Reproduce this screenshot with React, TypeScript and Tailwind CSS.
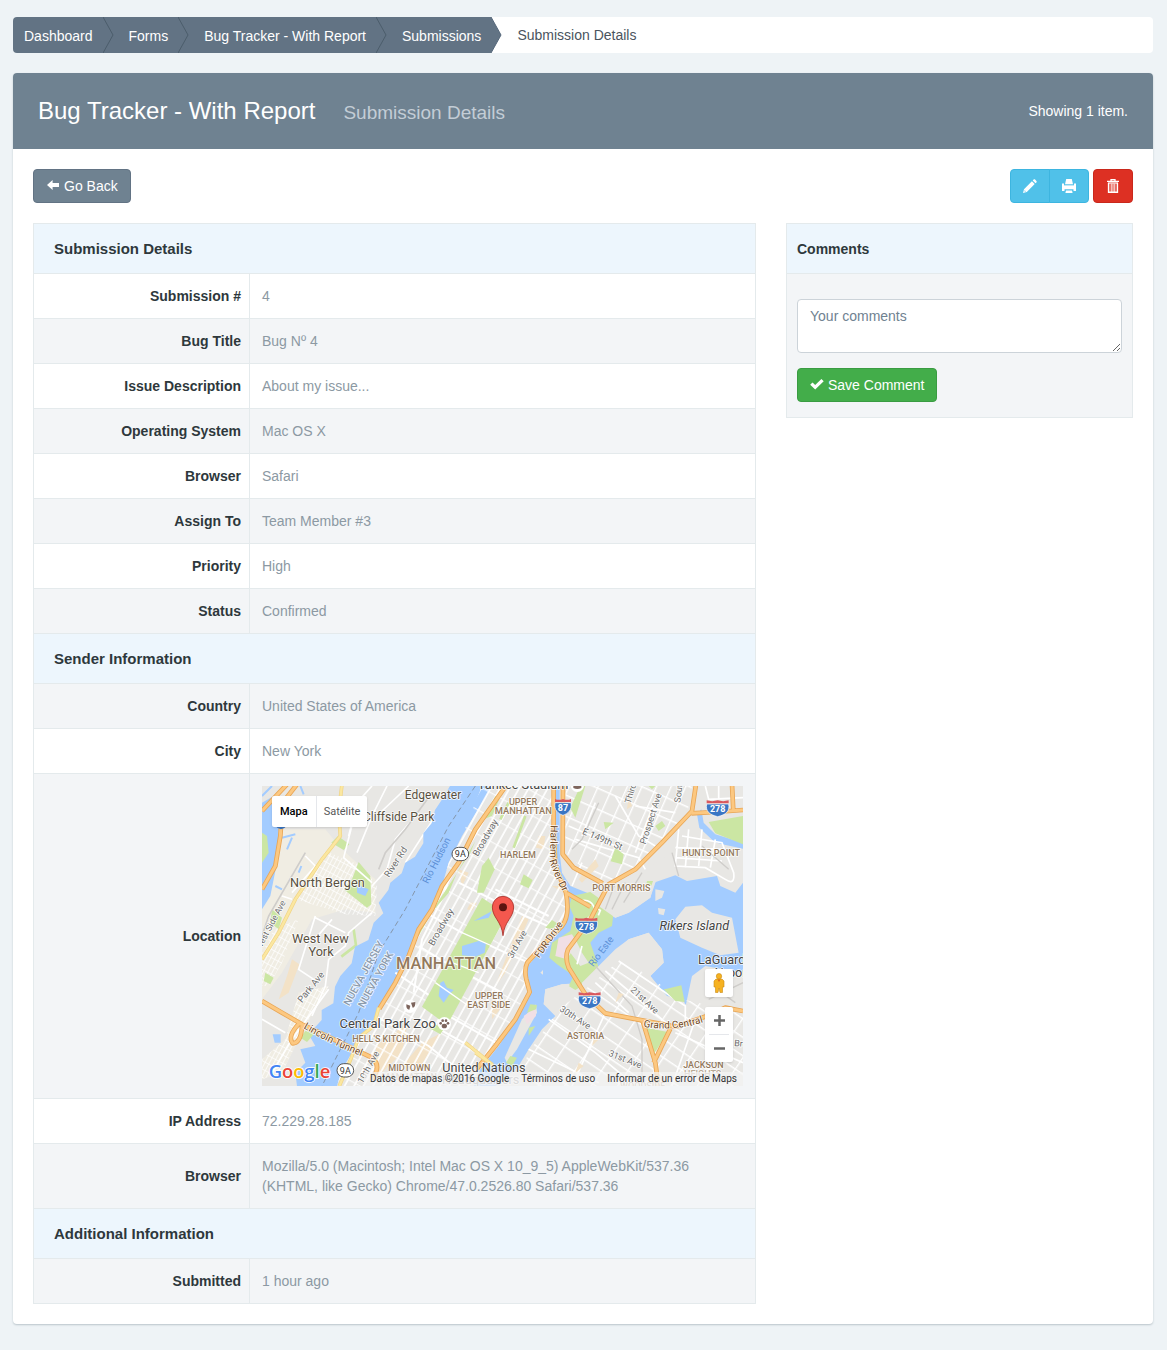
import React from "react";

type Row = { label?: string; value?: React.ReactNode; heading?: string };

const crumbs = ["Dashboard", "Forms", "Bug Tracker - With Report", "Submissions"];

const ArrowLeftIcon = () => (
  <svg viewBox="0 0 14 14" className="size-3.5" fill="currentColor" aria-hidden="true">
    <path d="M1 6 6.6 1V4H13v4H6.6v3z" />
  </svg>
);

const PencilIcon = () => (
  <svg viewBox="0 0 14 14" className="size-3.5" fill="currentColor" aria-hidden="true">
    <path d="M0 14l1-3.800L8.900 2.300l2.800 2.800L3.800 13zM9.700 1.500l.9-.9c.5-.5 1-.5 1.500 0l1.300 1.300c.5.5.5 1 0 1.500l-.9.900z" />
    <path d="M1.500 10.900l1.700 1.700-1 .3-1-1z" className="fill-[#9fdcf3]" />
  </svg>
);

const PrintIcon = () => (
  <svg viewBox="0 0 14 14" className="size-3.5" fill="currentColor" aria-hidden="true">
    <path d="M4.200 0h5.600l1.200 5.200H3z" />
    <path d="M0 4.500h2V6h10V4.500h2V12h-2.500v-1.800h-9V12H0z" />
    <path d="M2 6.400h10" className="stroke-[#a5dff4]" strokeWidth=".8" />
    <path d="M4 11.400h6l.6 2.600H3.400z" />
  </svg>
);

const TrashIcon = () => (
  <svg viewBox="0 0 14 14" className="size-3.5" fill="none" stroke="currentColor" aria-hidden="true">
    <path d="M5 1.800V.5h4v1.300M1 2.400h12" strokeWidth="1.300" />
    <path d="M2.600 4v9.300h8.800V4" strokeWidth="1.500" />
    <path d="M2 4h10" strokeWidth="1.200" />
    <path d="M5.200 4.500V13M7 4.500V13M8.800 4.500V13" strokeWidth="1" />
  </svg>
);

const CheckIcon = () => (
  <svg viewBox="0 0 14 14" className="size-3.5" fill="currentColor" aria-hidden="true">
    <path d="M.2 6.700 2.500 4.500l2.700 2.600L11.400.9l2.300 2.300-8.500 8.400z" />
  </svg>
);

const Shield = ({ x, y, n }: { x: number; y: number; n: string }) => {
  const w = n.length > 2 ? 33 : 24;
  return (
    <g transform={`translate(${x} ${y})`}>
      <path
        d={`M${-w} -12H${w}C${w + 4} 10 ${w - 8} 20 0 26C${8 - w} 20 ${-w - 4} 10 ${-w} -12z`}
        fill="#3a76c4"
        stroke="#fff"
        strokeWidth="2"
      />
      <path d={`M${-w} -14v-9q${w / 2} 5 ${w} 0q${w / 2} 5 ${w} 0v9z`} fill="#d9595f" />
      <text y="13" textAnchor="middle" fontSize="27" fontWeight="700" fill="#fff">
        {n}
      </text>
    </g>
  );
};

const Route9A = ({ x, y }: { x: number; y: number }) => (
  <g transform={`translate(${x} ${y})`}>
    <rect x="-25" y="-20" width="50" height="40" rx="20" fill="#fff" stroke="#555" strokeWidth="3" />
    <text y="10" textAnchor="middle" fontSize="27" fill="#333">
      9A
    </text>
  </g>
);

// name, x, y, size, colour, rotation, weight
type Label = [string, number, number, number, string, number?, number?];

const places: Label[] = [
  ["Edgewater", 513, 39, 36, "#59503f"],
  ["Cliffside Park", 410, 105, 36, "#59503f"],
  ["North Bergen", 196, 304, 38, "#59503f"],
  ["West New", 175, 472, 38, "#59503f"],
  ["York", 177, 510, 38, "#59503f"],
  ["Yankee Stadium", 783, 8, 38, "#444"],
  ["Central Park Zoo", 377, 725, 39, "#444"],
  ["United Nations", 666, 858, 38, "#444"],
  ["Headquarters", 656, 895, 38, "#999"],
  ["LaGuardia", 1394, 535, 38, "#444"],
  ["Airport", 1409, 574, 38, "#444"],
  ["MANHATTAN", 552, 549, 49, "#93795c", 0, 500],
  ["UPPER", 783, 57, 27, "#93795c", 0, 500],
  ["MANHATTAN", 784, 84, 28, "#93795c", 0, 500],
  ["HARLEM", 768, 216, 27, "#93795c", 0, 500],
  ["HUNTS POINT", 1347, 210, 27, "#93795c", 0, 500],
  ["PORT MORRIS", 1078, 315, 27, "#93795c", 0, 500],
  ["UPPER", 681, 639, 27, "#93795c", 0, 500],
  ["EAST SIDE", 680, 666, 27, "#93795c", 0, 500],
  ["ASTORIA", 971, 759, 27, "#93795c", 0, 500],
  ["HELL'S KITCHEN", 372, 768, 27, "#93795c", 0, 500],
  ["MIDTOWN", 442, 855, 27, "#93795c", 0, 500],
  ["MANHATTAN", 442, 882, 27, "#b8a995", 0, 500],
  ["JACKSON", 1324, 846, 27, "#93795c", 0, 500],
  ["HEIGHTS", 1322, 873, 27, "#b8a995", 0, 500],
  ["WOODSIDE", 1142, 910, 27, "#b8a995", 0, 500],
  ["Broadway", 678, 160, 28, "#6b6b6b", -60],
  ["Broadway", 545, 428, 28, "#6b6b6b", -60],
  ["River Rd", 409, 233, 28, "#6b6b6b", -57],
  ["Park Ave", 154, 609, 28, "#6b6b6b", -51],
  ["West Side Ave", 33, 422, 26, "#6b6b6b", -62],
  ["3rd Ave", 773, 479, 27, "#6b6b6b", -61],
  ["10th Ave", 327, 848, 27, "#6b6b6b", -61],
  ["Third Ave", 1122, 0, 27, "#6b6b6b", -73],
  ["Prospect Ave", 1175, 101, 27, "#6b6b6b", -72],
  ["Southern", 1262, -3, 27, "#6b6b6b", -82],
  ["E 149th St", 1018, 168, 28, "#6b6b6b", 23],
  ["21st Ave", 1142, 649, 27, "#6b6b6b", 43],
  ["30th Ave", 935, 702, 27, "#6b6b6b", 33],
  ["31st Ave", 1086, 828, 27, "#6b6b6b", 22],
  ["Broadway", 1475, 785, 27, "#6b6b6b", 5],
  ["FDR Drive", 868, 466, 29, "#714a26", -55],
  ["NUEVA JERSEY", 314, 567, 31, "#8a9aac", -61, 500],
  ["NUEVA YORK", 350, 586, 31, "#8a9aac", -61, 500],
];

const manhattan =
  "M660 0L600 150L560 230L540 300L505 370L465 440L440 510L400 590L350 660L335 720L290 750L270 800L240 850L225 900H635L655 850L710 780L760 700L805 620L790 550L830 500L905 410L920 330L890 250L880 180V0z";

const highways = [
  "M735 -5L640 130L590 230L540 300L510 370L470 430L440 510L400 590L352 668",
  "M875 -5V120L880 240L912 320Q925 390 900 420L850 470L796 530Q786 550 793 580L803 618L760 700L700 780L645 848",
  "M903 -5L902 205L935 245L1022 292",
  "M1302 -5L1290 75L1200 170L1120 250L1040 295L985 400L918 490Q908 515 920 545L970 625L1030 682L1140 703L1240 722L1335 690L1390 665L1443 675",
  "M915 322L985 362",
  "M1288 82L1360 78L1443 72M1410 -5L1414 75",
  "M105 -5L62 50L55 150L40 240L0 310M0 75L75 -5",
  "M0 645L60 680L120 715L330 815Q360 840 330 880",
  "M112 712Q75 750 92 772Q118 770 120 718",
  "M1142 705L1180 830L1190 905M1225 728L1175 830",
];

const yellowRoads =
  "M240 -5L230 80L235 150L180 220L100 340L50 440L0 520M350 665L335 720L290 755L268 815L232 900M610 770L690 835L640 800";

const MapDrawing = () => (
  <svg
    viewBox="0 0 1443 900"
    preserveAspectRatio="xMidYMid slice"
    className="block size-full font-['Roboto',sans-serif]"
    role="img"
    aria-label="New York"
  >
    <defs>
      <pattern id="avenues" width="25" height="64" patternUnits="userSpaceOnUse" patternTransform="rotate(29)">
        <path d="M3 0V64" stroke="#fff" strokeWidth="5" />
        <path d="M0 5H25" stroke="#fff" strokeWidth="3" />
      </pattern>
      <pattern id="blocks" width="12" height="22" patternUnits="userSpaceOnUse" patternTransform="rotate(28)">
        <path d="M1 0V22M0 1H12" stroke="#fff" strokeWidth="2.500" />
      </pattern>
      <pattern id="bronx" width="40" height="58" patternUnits="userSpaceOnUse" patternTransform="rotate(24)">
        <path d="M2 0V58M0 2H40" stroke="#fff" strokeWidth="4" />
      </pattern>
      <pattern id="queens" width="66" height="46" patternUnits="userSpaceOnUse" patternTransform="rotate(34)">
        <path d="M2 0V46M0 2H66" stroke="#fff" strokeWidth="4" />
      </pattern>
      <path id="lincoln" d="M124 726Q210 778 315 817" />
      <path id="harlemdr" d="M866 118L864 230Q880 280 912 335" />
      <path id="grandcentral" d="M1144 722Q1240 740 1345 702" />
    </defs>

    <rect width="1443" height="900" fill="#e8e7e4" />

    {/* New Jersey */}
    <path d="M60 130L190 130L240 190L340 280L340 380L250 370L150 400L60 560L0 640V320z" fill="#f0ede3" />
    <path d="M190 195L300 240L345 300L340 390L250 385L100 340z" fill="url(#blocks)" />
    <path d="M35 430L110 400L60 530L20 600L0 600V500z" fill="url(#blocks)" />
    <path d="M110 620L200 600L130 720L60 860L0 880V820L70 760z" fill="#f0ede3" />
    <path d="M110 620L200 600L130 720L60 860L0 880V820L70 760z" fill="url(#blocks)" />
    <path d="M0 50L35 30L50 130L45 230L25 330L0 370z" fill="#a3ccff" />
    <path d="M0 140L15 150L20 200L0 230z" fill="#cbe6a3" />
    <path d="M60 155L100 145M90 155L75 190M115 0L125 25M0 30L30 0M110 260L118 240M40 300L60 310" stroke="#a3ccff" strokeWidth="6" fill="none" />
    <path d="M32 745h24v25H38z" fill="#a3ccff" />
    <path d="M90 520L112 535L80 620L50 640L75 570z" fill="#f3e2c7" />
    <path d="M290 228L325 270L328 355L315 365L245 310L270 280z" fill="#cbe6a3" />
    <path d="M285 295L320 310L310 330L285 320z" fill="#a3ccff" />
    <path d="M228 150L262 175L245 192L208 170z" fill="#cbe6a3" />
    <path d="M30 370L60 395L50 430L25 410zM10 560L35 575L25 595L5 585z" fill="#cbe6a3" />
    <path d="M275 430L282 478L238 512" stroke="#cbe6a3" strokeWidth="8" fill="none" />
    <g stroke="#fff" strokeWidth="5" fill="none">
      <path d="M375 0L330 90L285 200M470 80L400 160L375 250L330 300M285 60L245 215L330 290" />
      <path d="M330 0L285 50L260 150M440 0L360 75M520 90L430 230M130 210L160 240L90 320" />
      <path d="M160 390L110 550L170 590M210 400L150 470M160 395L250 440M330 380L260 440L250 480L200 520L190 600L150 690" />
      <path d="M90 340L60 330M0 700L70 740M30 860L90 760L200 610" />
    </g>
    <path d="M130 200L20 390L0 450M350 250L370 200L430 130L510 20" stroke="#cfcdca" strokeWidth="5" fill="none" />

    {/* rivers and bay */}
    <path
      d="M564 0L539 42L519 72L509 112L484 142L484 172L459 212L430 230L419 262L385 290L379 312L350 350L364 382L335 410L319 462L279 482L269 532L235 570L219 602L214 652L179 672L179 702L140 745L160 780L115 790L130 830L100 860L105 900H225L240 850L270 800L290 750L335 720L350 660L400 590L440 510L465 440L505 370L540 300L560 230L600 150L690 0z"
      fill="#a3ccff"
    />
    <path
      d="M880 0H893V200L900 260L925 300L975 320L1000 360L1060 395L1100 380L1165 335L1175 290L1240 268L1275 285L1365 270L1375 300L1420 320L1443 290V640L1270 655L1262 640L1215 630L1165 570L1205 530L1200 490L1160 440L1100 460L1060 500L960 590L900 595L850 610L845 655L880 690L840 730L800 790L770 840L700 900H635L655 850L710 780L760 700L805 620L790 550L830 500L905 410L920 330L890 250L880 180z"
      fill="#a3ccff"
    />
    <path d="M1305 85L1318 70L1325 110L1360 145L1443 170V188L1360 170L1312 125z" fill="#a3ccff" />
    <path d="M1340 108L1443 90V175L1360 142z" fill="#cbe6a3" />
    <path d="M130 735L160 740L135 768L115 755z" fill="#cbe6a3" />

    {/* islands */}
    <path d="M1270 362L1320 358L1350 380L1410 395L1430 500L1375 508L1320 485L1255 455L1240 400z" fill="#e8e7e4" />
    <path d="M1180 310L1207 315L1200 335L1180 345zM1188 366L1210 370L1205 388L1190 384zM835 560l8 -8v14z" fill="#e8e7e4" />
    <path d="M1443 560L1330 540L1290 570L1272 655L1443 660z" fill="#e8e7e4" />
    <path d="M930 330L985 318L1030 350L1055 375L1050 420L1010 440L985 470L1012 550L955 615L920 600L935 570L885 535L862 515L870 470L925 435L935 390L922 360z" fill="#cbe6a3" />
    <path d="M890 455L930 445L945 470L915 520L880 510z" fill="#f1dfe5" />
    <path d="M940 460L960 500L980 530L955 540L925 500z" fill="#e8e7e4" />
    <path d="M955 345Q990 335 1000 375L975 400M1000 365l15 8-6 15M960 480l-15 55" stroke="#fff" strokeWidth="5" fill="none" />
    <path d="M822 655L825 680L765 790L735 830L728 815L780 700z" fill="#e8e7e4" />
    <path d="M785 690L820 665L822 690L795 715z" fill="#f1dfe5" />
    <path d="M805 655L825 657L822 670L795 680zM745 810L765 815L750 840L732 830zM800 725L820 720L800 750z" fill="#cbe6a3" />

    {/* Manhattan */}
    <g fill="#f3e2c7">
      <path d="M780 390L800 400L730 560L700 600L715 560zM690 640L730 650L690 700zM340 780L400 740L440 700L420 800L350 870zM480 770L540 740L470 850L420 840z" />
      <path d="M590 250L620 260L600 300zM625 350L645 350L630 375L615 370zM830 150L850 150L845 190L822 185zM890 300L905 320L870 300z" />
    </g>
    <path d={manhattan} fill="url(#avenues)" />
    <path d="M590 290L790 390L880 430M700 310L860 390M500 385L600 440L730 500L800 530M470 480L560 535L720 620M400 560L520 640M340 690L500 780L600 860M480 700L640 790M560 690L700 770" stroke="#fff" strokeWidth="6" fill="none" />
    <path d="M700 40L650 130L560 280L545 330L480 460L455 620" stroke="#fff" strokeWidth="6" fill="none" />
    <path d="M660 335L735 385L565 700L545 710L480 662z" fill="#cbe6a3" />
    <path d="M600 480L650 465L672 472L668 500L640 512L600 508zM535 590L545 585L555 605L575 612L560 628L545 650L530 630zM690 375l-10 20-45 10z" fill="#a3ccff" />
    <path d="M600 440L690 480M570 530L650 560M520 590L620 660" stroke="#fff" strokeWidth="4" fill="none" />
    <path d="M680 215L698 250L665 320L645 320L660 240z" fill="#cbe6a3" />
    <path d="M785 265L812 282L800 307L774 295zM712 40L690 90L665 100L700 30zM560 320L585 260L640 165L625 200L520 360L470 450L465 430zM870 402L890 415L870 430L850 425zM500 725L535 745L545 730L520 715z" fill="#cbe6a3" />
    <path d="M790 90L755 185M740 50L715 100" stroke="#cbe6a3" strokeWidth="8" />

    {/* Bronx */}
    <path d="M910 0H1290L1275 90L1110 250L1040 290L990 270L910 200z" fill="url(#bronx)" />
    <path d="M1040 300L1140 260L1240 190L1180 290L1165 335L1100 380L1060 395L1010 360zM1260 130L1390 180L1425 280L1380 265L1250 250z" fill="#e8e7e4" />
    <g stroke="#fff" strokeWidth="5" fill="none">
      <path d="M940 160L1130 215L1150 250M1000 50L960 150M1060 30L1130 150L1180 180M1180 40L1120 200M1240 80L1120 60M920 120L1060 180" />
      <path d="M1250 130L1240 240L1330 245L1390 280Q1420 300 1415 260L1380 170L1260 150M1320 130L1310 240M1360 160L1345 245M1240 185L1385 190M1280 130L1270 245M1240 215L1380 225" />
      <path d="M1330 0L1340 40L1443 35M1370 0V40M960 230L930 300" />
    </g>
    <path d="M1060 290L1030 370M1090 290L1050 370M1140 260L1085 350M1230 200L1250 270M930 190L960 160L1010 50M1320 180L1400 250" stroke="#cfcdca" strokeWidth="4" fill="none" />
    <path d="M1060 185L1085 205L1080 235L1046 226zM970 0L940 95L925 65L955 0zM1200 105L1210 120L1190 135L1180 120zM1025 108L1055 110L1030 130zM1160 0H1180L1170 10zM1155 285l18 0-5 14-15-4z" fill="#cbe6a3" />
    <path d="M1000 220L1010 240L960 290L950 280zM1100 30L1110 60L1095 70z" fill="#f3e2c7" />

    {/* Queens */}
    <path d="M1070 510L1260 640L1443 680V900H760L800 800L890 670L960 600z" fill="url(#queens)" />
    <path d="M845 655L850 610L900 595L950 600L1060 490L1100 460L1160 440L1200 490L1205 530L1165 570L1215 640L1150 560L1070 525L970 610L890 670z" fill="#e8e7e4" />
    <path d="M1070 525L1270 660V720M1030 555L1200 700M1000 590L1100 680M1030 680L930 900M860 700L1000 800L1120 900M1240 740L1443 830M1300 700L1230 900M800 790L1010 890" stroke="#fff" strokeWidth="5" fill="none" />
    <path d="M1000 540L1110 660L1140 760V900M1340 640L1443 590M1350 600L1420 650" stroke="#cfcdca" strokeWidth="4" fill="none" />
    <path d="M1215 608L1258 598L1268 648L1240 645L1205 610zM1150 725L1218 738L1175 805zM920 600L960 575L960 600L940 612z" fill="#cbe6a3" />
    <path d="M1070 620L1085 625L1060 650zM1000 740L1015 755L990 780zM950 830L965 840L940 860z" fill="#f3e2c7" />

    {/* highways */}
    <g fill="none" strokeLinejoin="round">
      {highways.map((d) => (
        <path key={d} d={d} stroke="#e9a655" strokeWidth="14" />
      ))}
      {highways.map((d) => (
        <path key={d} d={d} stroke="#fcc881" strokeWidth="9" />
      ))}
      <path d={yellowRoads} stroke="#f0d486" strokeWidth="11" />
      <path d={yellowRoads} stroke="#fbe7a0" strokeWidth="7" />
      <path d="M640 0L560 120L430 370L350 500L290 680L180 900" stroke="#8596aa" strokeWidth="3" strokeDasharray="16 10" />
    </g>

    <g stroke="#fff" strokeOpacity="0.85" strokeWidth="5" strokeLinejoin="round" className="[paint-order:stroke]">
      {places.map(([name, x, y, size, fill, rotate = 0, weight = 400], i) => (
        <text
          key={i}
          transform={`translate(${x} ${y}) rotate(${rotate})`}
          textAnchor="middle"
          fontSize={size}
          fontWeight={weight}
          fill={fill}
        >
          {name}
        </text>
      ))}
      <text x="1297" y="431" textAnchor="middle" fontSize="38" fontStyle="italic" fill="#444">
        Rikers Island
      </text>
      <g fontSize="30" fill="#714a26">
        <text>
          <textPath href="#lincoln">Lincoln Tunnel</textPath>
        </text>
        <text>
          <textPath href="#harlemdr">Harlem River Dr</textPath>
        </text>
        <text>
          <textPath href="#grandcentral">Grand Central</textPath>
        </text>
      </g>
    </g>
    <g fontSize="29" fill="#5b8fd6" textAnchor="middle">
      <text transform="translate(532 228) rotate(-63)">Río Hudson</text>
      <text transform="translate(1025 502) rotate(-53)">Río Este</text>
    </g>

    <Shield x={903} y={62} n="87" />
    <Shield x={1367} y={66} n="278" />
    <Shield x={973} y={418} n="278" />
    <Shield x={983} y={642} n="278" />
    <Route9A x={595} y={204} />
    <Route9A x={250} y={853} />
    <path d="M40 120Q57 140 74 120z" fill="#3a76c4" />

    {/* points of interest */}
    <g fill="#7d655d">
      <circle cx="547" cy="713" r="20" fill="#fff" />
      <ellipse cx="547" cy="720" rx="8" ry="7" />
      <circle cx="536" cy="712" r="4" />
      <circle cx="542" cy="704" r="4" />
      <circle cx="552" cy="704" r="4" />
      <circle cx="558" cy="712" r="4" />
      <circle cx="444" cy="661" r="20" fill="#fff" />
      <path d="M433 655l12 4-3 12q-10 0-9-16zM447 650l13 -2q1 16-8 17z" />
      <circle cx="946" cy="-2" r="20" fill="#fff" />
      <path d="M934 -4h24v10q-12 6-24 0z" />
    </g>

    {/* marker */}
    <path
      d="M723 449C719 405 691 395 691 363A32 32 0 0 1 755 363C755 395 727 405 723 449z"
      fill="#f4584e"
      stroke="#a8302a"
      strokeWidth="2.500"
    />
    <circle cx="723" cy="364" r="12" fill="#5c1410" />

    <text x="20" y="876" fontSize="55" fontWeight="600" stroke="#fff" strokeWidth="5" className="font-['Open_Sans',sans-serif] [paint-order:stroke]">
      <tspan fill="#4285f4">G</tspan>
      <tspan fill="#ea4335">o</tspan>
      <tspan fill="#fbbc05">o</tspan>
      <tspan fill="#4285f4">g</tspan>
      <tspan fill="#34a853">l</tspan>
      <tspan fill="#ea4335">e</tspan>
    </text>
  </svg>
);

const LocationMap = () => (
  <div className="relative h-[300px] overflow-hidden font-['Roboto',sans-serif]">
    <MapDrawing />
    <div className="absolute left-2.5 top-2.5 flex h-[31px] rounded-xs bg-white text-[11px] shadow-sm">
      <button className="border-r border-gray-200 px-2 font-medium text-black">Mapa</button>
      <button className="px-[7px] text-[#565656]">Satélite</button>
    </div>
    <button aria-label="Street View" className="absolute bottom-[89px] right-2.5 flex size-7 items-center justify-center rounded-xs bg-white shadow-sm">
      <svg viewBox="0 0 12 20" className="h-5 w-3" aria-hidden="true">
        <path d="M3 6h6l2 2v6H9.500V19.500H7L6 15l-1 4.500H2.500V14H1V8z" fill="#f6b221" stroke="#c98b16" strokeWidth=".6" />
        <circle cx="6" cy="3.200" r="2.700" fill="#f6b221" stroke="#c98b16" strokeWidth=".6" />
        <path d="M4.500 6.500h3L6 9z" fill="#e06a1b" />
      </svg>
    </button>
    <div className="absolute bottom-6 right-2.5 flex w-7 flex-col rounded-xs bg-white text-[#666] shadow-sm">
      <button aria-label="Zoom in" className="flex h-[27px] items-center justify-center">
        <svg viewBox="0 0 11 11" className="size-[11px]" stroke="currentColor" strokeWidth="2.500" aria-hidden="true">
          <path d="M0 5.500h11M5.500 0v11" />
        </svg>
      </button>
      <div className="mx-1 h-px bg-gray-200" />
      <button aria-label="Zoom out" className="flex h-[27px] items-center justify-center">
        <svg viewBox="0 0 11 11" className="size-[11px]" stroke="currentColor" strokeWidth="2.500" aria-hidden="true">
          <path d="M0 5.500h11" />
        </svg>
      </button>
    </div>
    <div className="absolute bottom-0 right-0 flex h-3.5 items-center gap-3 bg-[#f5f5f5]/70 px-1.5 text-[10px] text-[#333]">
      <span>Datos de mapas ©2016 Google</span>
      <a href="#terms">Términos de uso</a>
      <a href="#report">Informar de un error de Maps</a>
    </div>
  </div>
);

const rows: Row[] = [
  { heading: "Submission Details" },
  { label: "Submission #", value: "4" },
  { label: "Bug Title", value: "Bug Nº 4" },
  { label: "Issue Description", value: "About my issue..." },
  { label: "Operating System", value: "Mac OS X" },
  { label: "Browser", value: "Safari" },
  { label: "Assign To", value: "Team Member #3" },
  { label: "Priority", value: "High" },
  { label: "Status", value: "Confirmed" },
  { heading: "Sender Information" },
  { label: "Country", value: "United States of America" },
  { label: "City", value: "New York" },
  { label: "Location", value: <LocationMap /> },
  { label: "IP Address", value: "72.229.28.185" },
  {
    label: "Browser",
    value:
      "Mozilla/5.0 (Macintosh; Intel Mac OS X 10_9_5) AppleWebKit/537.36 (KHTML, like Gecko) Chrome/47.0.2526.80 Safari/537.36",
  },
  { heading: "Additional Information" },
  { label: "Submitted", value: "1 hour ago" },
];

const Breadcrumb = () => (
  <nav className="rounded bg-white">
    <ol className="flex h-9 items-center">
      {crumbs.map((crumb, i) => (
        <li
          key={crumb}
          className="relative flex h-full items-center bg-[#627384] pl-[26px] pr-2.5 text-white first:rounded-l first:pl-[11px]"
        >
          <a href="#crumb" className="pt-0.5">
            {crumb}
          </a>
          <svg viewBox="0 0 11 36" className="absolute left-full top-0 z-10 h-9 w-[11px]" aria-hidden="true">
            <path d="M0 0L10 18L0 36z" fill="#627384" />
            <path d="M0 0L10 18L0 36" fill="none" stroke={i < crumbs.length - 1 ? "#4c5d6b" : "#55677a"} />
          </svg>
        </li>
      ))}
      <li className="pl-[26px] text-[#4a545e]">Submission Details</li>
    </ol>
  </nav>
);

const DetailsTable = () => (
  <table className="w-full table-fixed border-collapse self-start">
    <colgroup>
      <col className="w-[216px]" />
      <col />
    </colgroup>
    <tbody>
      {rows.map((row, i) =>
        row.heading ? (
          <tr key={i} className="bg-[#edf6fd]">
            <th colSpan={2} className="h-[50px] border border-[#e4eaec] px-5 text-left text-[15px] font-bold text-[#2e383c]">
              {row.heading}
            </th>
          </tr>
        ) : (
          <tr key={i} className="odd:bg-[#f3f5f7] even:bg-white">
            <th scope="row" className="border border-[#e4eaec] py-3 pl-3 pr-2 text-right font-bold text-[#2e383c]">
              {row.label}
            </th>
            <td className="border border-[#e4eaec] p-3 text-[#8c99a3]">{row.value}</td>
          </tr>
        )
      )}
    </tbody>
  </table>
);

const Comments = () => (
  <section className="self-start border border-[#e4eaec] bg-[#f3f5f7]">
    <h2 className="flex h-[50px] items-center border-b border-[#e4eaec] bg-[#edf6fd] px-2.5 font-bold text-[#2e383c]">
      <label htmlFor="comment">Comments</label>
    </h2>
    <form className="px-2.5 pb-[15px] pt-[25px]" onSubmit={(e) => e.preventDefault()}>
      <textarea
        id="comment"
        placeholder="Your comments"
        className="mb-[15px] block h-[54px] w-full rounded border border-[#ccd3d9] bg-white px-3 py-1.5 placeholder:text-[#6f8291]"
      />
      <button className="flex h-[34px] items-center gap-1 rounded border border-[#3a9c42] bg-[#43ad4a] px-3 text-white">
        <CheckIcon />
        Save Comment
      </button>
    </form>
  </section>
);

const App = () => {
  return (
    <div className="min-h-screen bg-[#eef3f6] pb-[25px] pl-[13px] pr-3.5 pt-[17px] font-['Liberation_Sans',Arial,sans-serif] text-sm/5">
      <Breadcrumb />
      <main className="mt-5 rounded bg-white shadow-[0_1px_2px_#b9c4cb]">
        <header className="flex h-[76px] items-center justify-between rounded-t bg-[#6f8291] px-[25px] text-white">
          <div className="flex items-baseline gap-7">
            <h1 className="text-2xl">Bug Tracker - With Report</h1>
            <span className="text-[19px] text-[#c3cdd6]">Submission Details</span>
          </div>
          <p>Showing 1 item.</p>
        </header>
        <div className="p-5">
          <div className="flex justify-between">
            <button className="flex h-[34px] items-center gap-1 rounded border border-[#627384] bg-[#6f8291] px-3 text-white">
              <ArrowLeftIcon />
              Go Back
            </button>
            <div className="flex gap-1 text-white">
              <div className="flex -space-x-px">
                <button aria-label="Edit" className="flex h-[34px] w-10 items-center justify-center rounded-l border border-[#3db5e0] bg-[#50c1e9]">
                  <PencilIcon />
                </button>
                <button aria-label="Print" className="flex h-[34px] w-10 items-center justify-center rounded-r border border-[#3db5e0] bg-[#50c1e9]">
                  <PrintIcon />
                </button>
              </div>
              <button aria-label="Delete" className="flex h-[34px] w-10 items-center justify-center rounded border border-[#c9281c] bg-[#dd3023]">
                <TrashIcon />
              </button>
            </div>
          </div>
          <div className="mt-5 grid grid-cols-[723fr_347fr] gap-[30px]">
            <DetailsTable />
            <Comments />
          </div>
        </div>
      </main>
    </div>
  );
};

export default App;
